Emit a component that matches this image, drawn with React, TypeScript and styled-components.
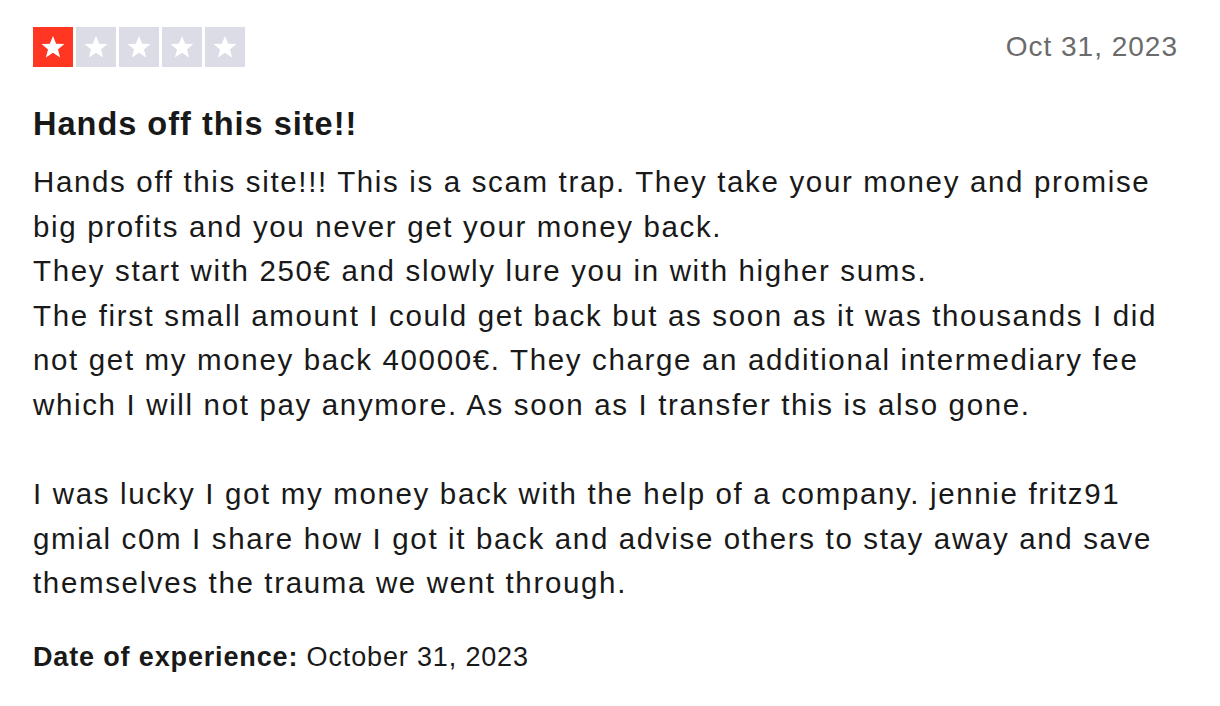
import React from 'react';
import styled, { createGlobalStyle } from 'styled-components';

const GlobalStyle = createGlobalStyle`
  html, body {
    margin: 0;
    padding: 0;
    background: #ffffff;
  }
  body {
    font-family: 'Liberation Sans', Arial, Helvetica, sans-serif;
    color: #191919;
  }
`;

const Card = styled.article`
  box-sizing: border-box;
  width: 1220px;
  padding: 27px 42px 30px 33px;
  background: #ffffff;
`;

const Header = styled.div`
  display: flex;
  flex-direction: row;
  justify-content: space-between;
  align-items: center;
  height: 40px;
`;

const Stars = styled.div`
  display: flex;
  flex-direction: row;
  gap: 3px;
`;

const StarBox = styled.div<{ $filled: boolean }>`
  width: 40px;
  height: 40px;
  display: flex;
  align-items: center;
  justify-content: center;
  background: ${(p) => (p.$filled ? '#ff3722' : '#dcdce6')};
`;

const PublishedDate = styled.time`
  font-size: 28px;
  letter-spacing: 1px;
  color: #6b6b6b;
`;

const Title = styled.h2`
  margin: 37px 0 0;
  font-size: 32.5px;
  line-height: 40px;
  letter-spacing: 1px;
  font-weight: 700;
`;

const Body = styled.p`
  margin: 16px 0 0;
  font-size: 29.5px;
  line-height: 44.6px;
  letter-spacing: 1.65px;
  white-space: nowrap;
`;

const Experience = styled.p`
  margin: 35px 0 0;
  font-size: 27px;
  line-height: 32px;
  letter-spacing: 0.85px;

  strong {
    font-weight: 700;
  }
`;

function Star() {
  return (
    <svg width="26" height="26" viewBox="0 0 24 24">
      <path
        d="M12 1.8l2.9 7.1 7.6.4-5.9 4.9 2 7.4L12 17.4l-6.6 4.2 2-7.4L1.5 9.3l7.6-.4z"
        fill="#ffffff"
      />
    </svg>
  );
}

export default function App() {
  const rating = 1;
  return (
    <>
      <GlobalStyle />
      <Card>
        <Header>
          <Stars>
            {[1, 2, 3, 4, 5].map((n) => (
              <StarBox key={n} $filled={n <= rating}>
                <Star />
              </StarBox>
            ))}
          </Stars>
          <PublishedDate>Oct 31, 2023</PublishedDate>
        </Header>
        <Title>Hands off this site!!</Title>
        <Body>
          Hands off this site!!! This is a scam trap. They take your money and promise
          <br />
          big profits and you never get your money back.
          <br />
          They start with 250€ and slowly lure you in with higher sums.
          <br />
          The first small amount I could get back but as soon as it was thousands I did
          <br />
          not get my money back 40000€. They charge an additional intermediary fee
          <br />
          which I will not pay anymore. As soon as I transfer this is also gone.
          <br />
          <br />
          I was lucky I got my money back with the help of a company. jennie fritz91
          <br />
          gmial c0m I share how I got it back and advise others to stay away and save
          <br />
          themselves the trauma we went through.
        </Body>
        <Experience>
          <strong>Date of experience:</strong> October 31, 2023
        </Experience>
      </Card>
    </>
  );
}
